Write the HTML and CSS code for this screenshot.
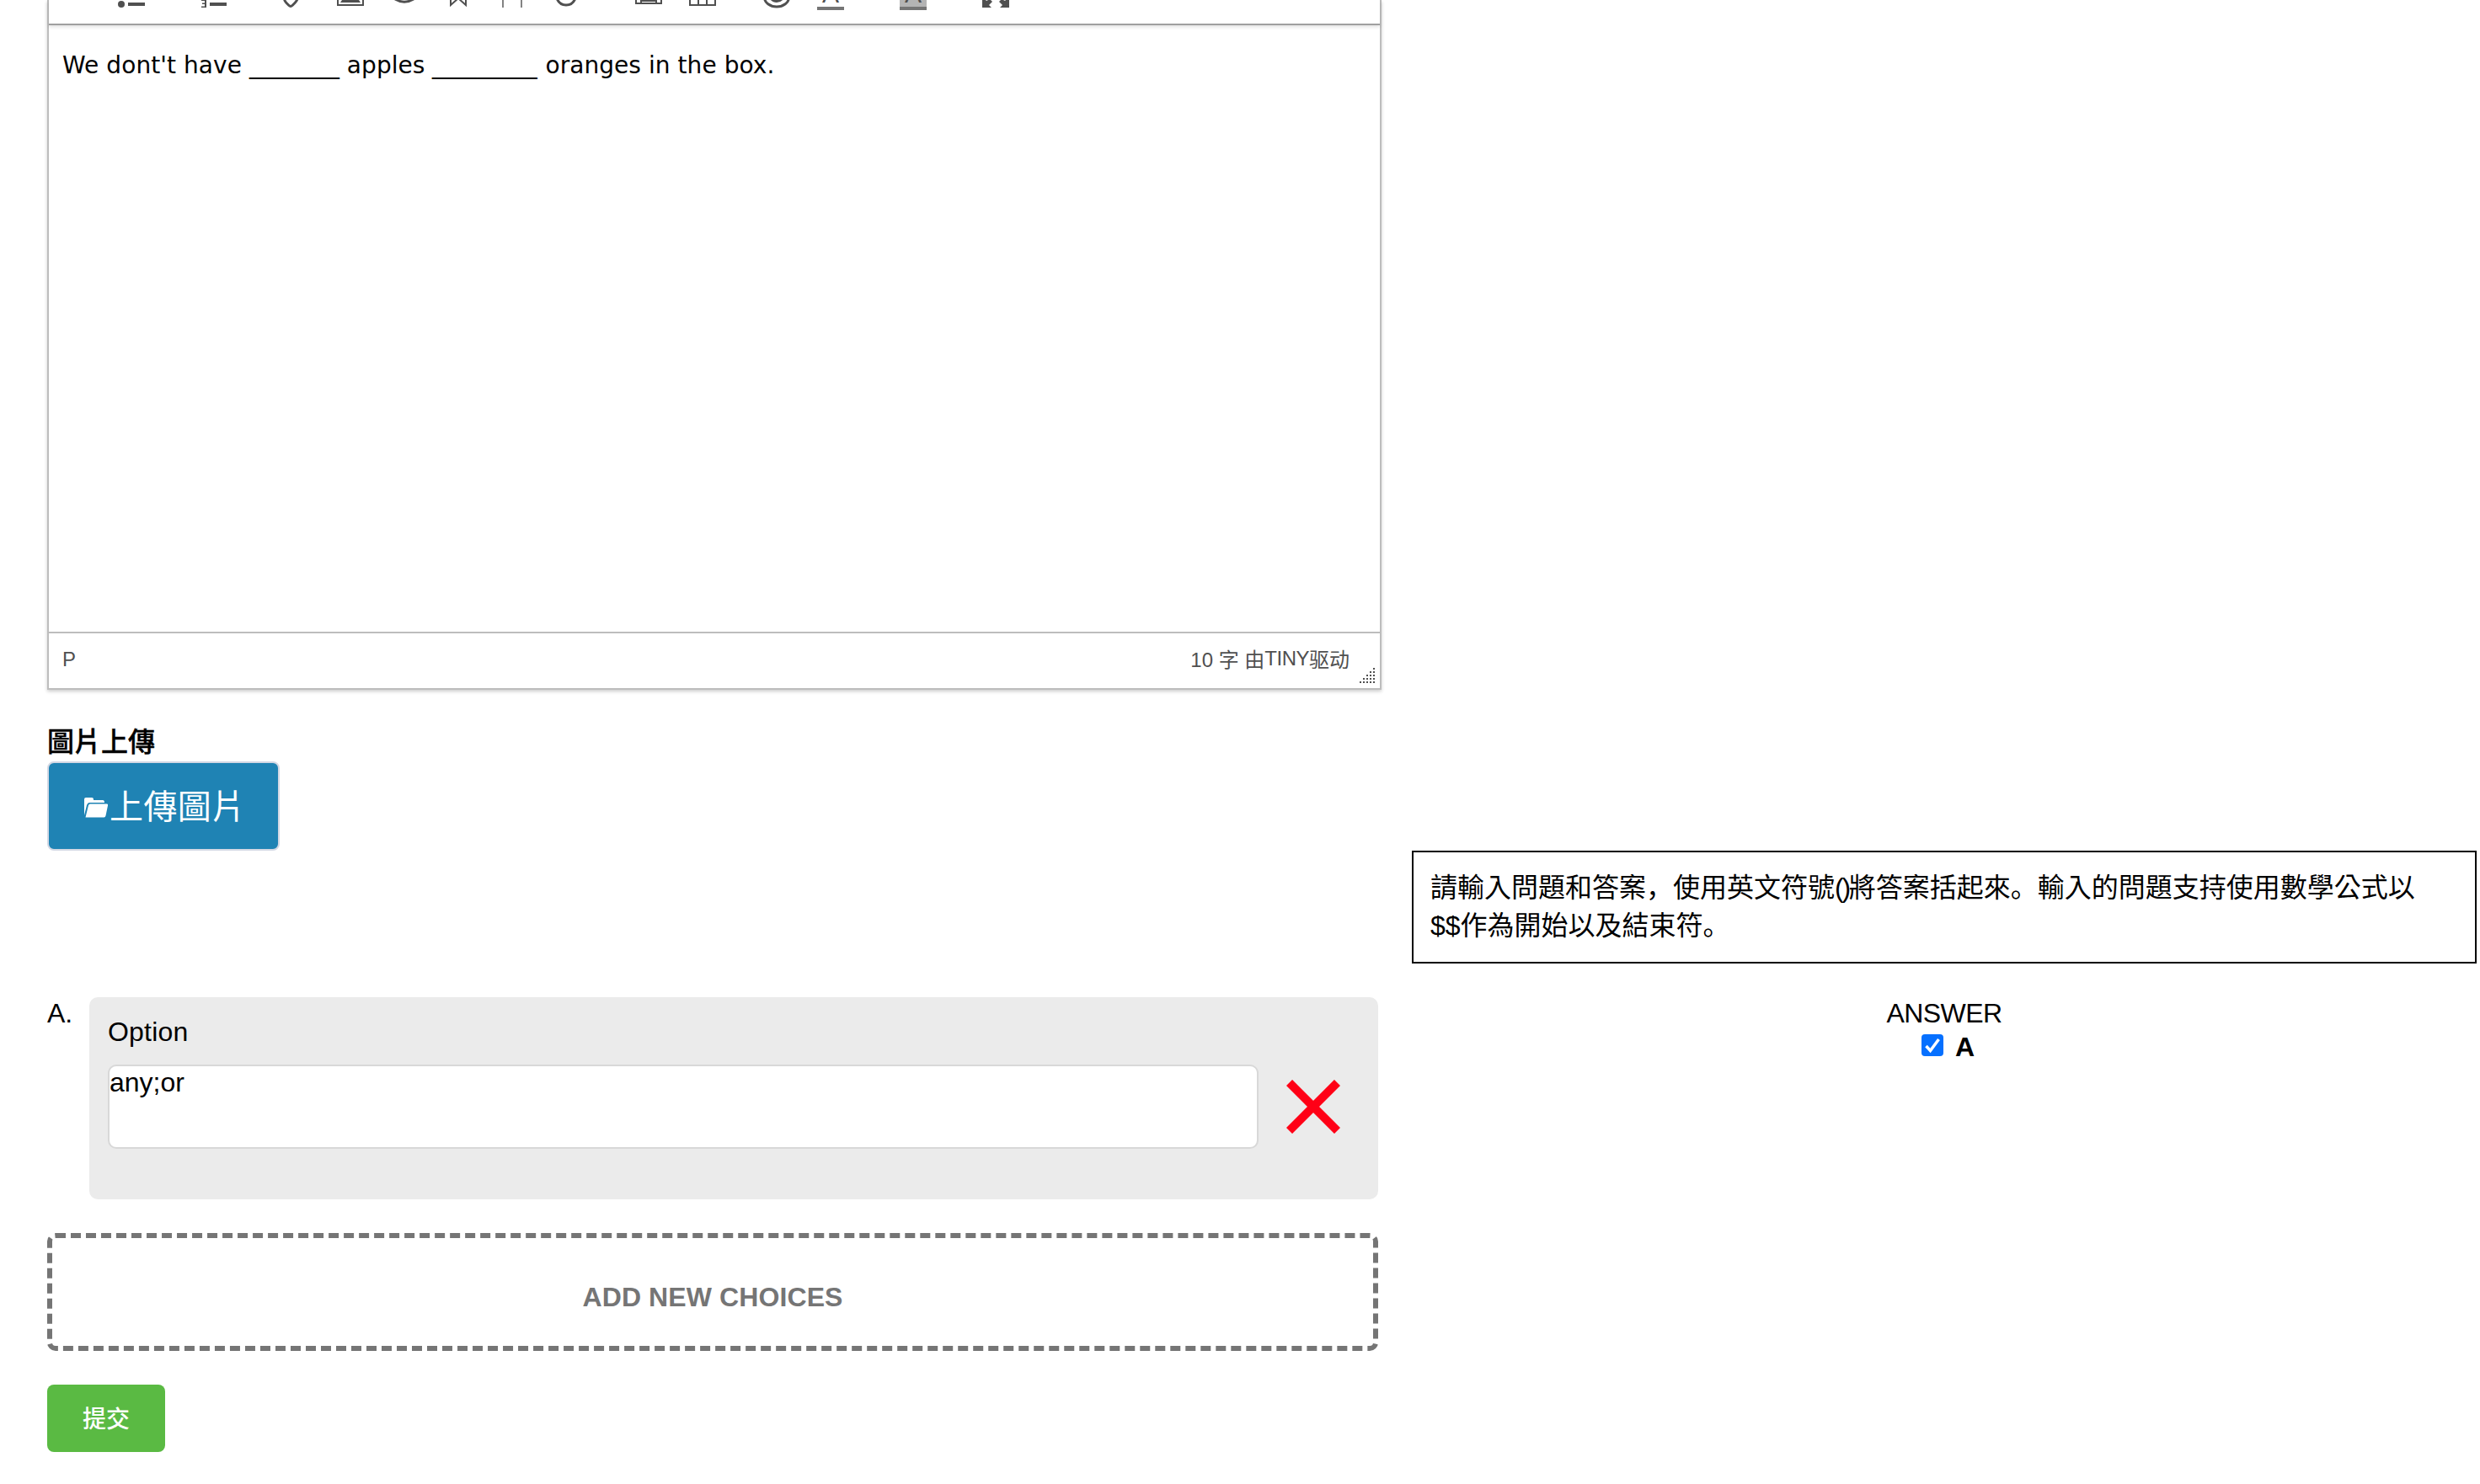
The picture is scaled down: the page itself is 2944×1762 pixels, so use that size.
FILE: index.html
```html
<!DOCTYPE html>
<html lang="zh-Hant">
    <head>
        <meta charset="utf-8">
        <title>Question Editor</title>
        <link rel="stylesheet" href="styles.css">
    </head>
    <body>
        <div id="page">
            <!-- Question editor and its note -->
            <div id="question">
                <div class="editor">
                    <!-- Only the bottom part of the toolbar is in view -->
                    <div class="toolbar">
                        <svg viewBox="0 0 32 28"><circle cx="4" cy="5" r="4"/><path d="M12 3h20v4H12z"/></svg>
                        <svg class="menu" viewBox="0 0 32 28"><path d="M1 0h6v9H1V7.500h4V5H2V3.500h3V1H1zM11 3h20v4H11z"/></svg>
                        <svg class="line menu" viewBox="0 0 32 28"><path d="M1.500-1Q2 1.500 4 3.500L7 6.500Q9 8.300 11 6.500L14 3.500Q16 1.500 17-1"/></svg>
                        <svg viewBox="0 0 32 28"><path d="M0-5h2V5h28V-5h2V7H0zM4 3l4-6h16l4 6z"/></svg>
                        <svg class="line" viewBox="0 0 32 28"><path d="M5-1Q16 5.500 27-1"/></svg>
                        <svg class="line thin" viewBox="0 0 32 28"><path d="M7-4V6l9-8 9 8V-4"/></svg>
                        <svg class="line thin faded" viewBox="0 0 32 28"><path d="M5-4V9M27-4V9"/></svg>
                        <svg class="line" viewBox="0 0 32 28"><path d="M5-2Q8 6 16 6T27-2"/></svg>
                        <svg class="line thin menu" viewBox="0 0 32 28"><path d="M1-4V4h30V-4M7-4V4M25-4V4M7 1h18"/></svg>
                        <svg class="line thin" viewBox="0 0 32 28"><path d="M1-4V6h30V-4M11-4V6M21-4V6"/></svg>
                        <svg class="smile" viewBox="0 0 32 28"><path class="ring" d="M1.500-3a14.500 11 0 0 0 29 0"/><path d="M8-1h16q-3 4-8 4t-8-4z"/></svg>
                        <svg class="color" viewBox="0 0 32 28"><text x="16" y="3">A</text><path class="bar" d="M0 8h32v4H0z"/></svg>
                        <svg class="color menu" viewBox="0 0 32 28"><path class="back" d="M0 0h32v8H0z"/><text x="16" y="3">A</text><path class="bar" d="M0 8h32v4H0z"/></svg>
                        <svg class="menu" viewBox="0 0 32 28"><path d="M0-4l5 5 4-2 3 3-4 4 3 3H0zM32-4l-5 5-4-2-3 3 4 4-3 3h11z"/></svg>
                    </div>
                    <div class="content">We dont't have <span class="blank six">______</span> apples <span class="blank seven">_______</span> oranges in the box.</div>
                    <div class="statusbar">
                        <span class="path">P</span>
                        <span class="words">10 字 由<span class="brand">TINY</span>驱动</span>
                        <svg class="resize" viewBox="0 0 18 18"><path d="M16 0h2v2h-2zM12 4h2v2h-2zM16 4h2v2h-2zM8 8h2v2H8zM12 8h2v2h-2zM16 8h2v2h-2zM4 12h2v2H4zM8 12h2v2H8zM12 12h2v2h-2zM16 12h2v2h-2zM0 16h2v2H0zM4 16h2v2H4zM8 16h2v2H8zM12 16h2v2h-2zM16 16h2v2h-2z"/></svg>
                    </div>
                </div>

                <label class="label">圖片上傳</label>
                <button class="upload">
                    <svg viewBox="0 0 32 26"><path d="M2 22V3q0-2 2-2h7q2 0 2 2v1h11q2 0 2 3H8q-2 0-3 3z"/><path d="M7 10q.7-1.500 2-1.500h20q1.500 0 1 2l-2.500 12q-.5 2-2 2H3.500z"/></svg><span>上傳圖片</span>
                </button>
            </div>

            <div class="note">請輸入問題和答案<span class="mark" lang="zh-Hans">，</span>使用英文符號<span class="tight">()</span>將答案括起來<span class="mark" lang="zh-Hans">。</span>輸入的問題支持使用數學公式以$$作為開始以及結束符<span class="mark" lang="zh-Hans">。</span></div>

            <!-- Choices -->
            <div id="choices">
                <div class="choice">
                    <div class="letter">A.</div>
                    <div class="option">
                        <div class="title">Option</div>
                        <div class="row">
                            <div class="answer-input">any;or</div>
                            <svg class="remove" viewBox="0 0 64 64"><path d="M3.500 3.500l57 57M60.500 3.500l-57 57"/></svg>
                        </div>
                    </div>
                </div>
                <div class="add">ADD NEW CHOICES</div>
                <button class="submit">提交</button>
            </div>

            <div class="answers">
                <div class="heading">ANSWER</div>
                <label class="check">
                    <svg viewBox="0 0 26 26"><rect width="26" height="26" rx="4"/><path d="M5.500 14l5 5.500L20.500 6"/></svg>
                    <b>A</b>
                </label>
            </div>
        </div>
    </body>
</html>
```
FILE: styles.css
```css
* {
    box-sizing: border-box;
}

body {
    margin: 0;
    background: #fff;
    color: #000;
    font-family: "Liberation Sans", "Noto Sans CJK TC", sans-serif;
    font-size: 32px;
    line-height: 40px;
}

#page {
    display: grid;
    grid-template-columns: 1584px 1264px;
    grid-template-rows: 1144px auto;
    column-gap: 36px;
    row-gap: 40px;
    padding-left: 56px;
    height: 1762px;
    overflow: hidden;
}

/**Editor**/
.editor {
    display: flex;
    flex-direction: column;
    height: 819px;
    border: 2px solid #bdbdbd;
    border-top: 0;
    box-shadow: 0 2px 4px rgba(0, 0, 0, .2);
}

.toolbar {
    display: flex;
    gap: 32px;
    height: 30px;
    padding-left: 82px;
    border-bottom: 2px solid #a0a0a0;
    box-shadow: 0 2px 4px rgba(0, 0, 0, .12);
    overflow: hidden;
}

.toolbar svg {
    flex: none;
    width: 32px;
    height: 28px;
    fill: #505050;
}

/*extra room for the dropdown arrow before these*/
.toolbar .menu {
    margin-left: 34px;
}

.toolbar .line {
    fill: none;
    stroke: #505050;
    stroke-width: 3;
}

.toolbar .thin {
    stroke-width: 2;
}

.toolbar .faded {
    opacity: .7;
}

.toolbar .smile {
    margin-left: 24px;
}

.ring {
    fill: none;
    stroke: #505050;
    stroke-width: 3;
}

.color text {
    font-size: 30px;
    text-anchor: middle;
}

.color .bar {
    fill: #757575;
}

.color .back {
    fill: #b4b4b4;
}

.content {
    flex: 1;
    padding: 28px 16px;
    font-family: "DejaVu Sans", sans-serif;
    font-size: 28px;
    letter-spacing: .06px;
    white-space: nowrap;
}

/*Blanks are stretched to the width of a wide underscore*/
.blank {
    display: inline-block;
    letter-spacing: 0;
    transform: scaleX(1.272);
    transform-origin: left;
}

.six {
    width: 107px;
}

.seven {
    width: 125px;
}

.statusbar {
    position: relative;
    display: flex;
    justify-content: space-between;
    height: 67px;
    padding: 11px 36px 0 16px;
    border-top: 2px solid #bdbdbd;
    color: #505050;
    font-family: "Liberation Sans", "Noto Sans CJK SC", sans-serif;
    font-size: 24px;
}

.words {
    padding-top: 1px;
}

.brand {
    position: relative;
    top: -2px;
    letter-spacing: -.5px;
}

.resize {
    position: absolute;
    right: 6px;
    bottom: 6px;
    width: 18px;
    height: 18px;
    fill: #505050;
}

/**Image upload**/
.label {
    display: block;
    height: 85px;
    padding-top: 42px;
    font-weight: 500;
    -webkit-text-stroke: .4px #000;
}

.upload {
    display: flex;
    align-items: center;
    width: 276px;
    height: 106px;
    padding: 0 40px;
    border: 2px solid #d3d8e4;
    border-radius: 8px;
    background: #1f83b4;
    color: #fff;
    font-family: "Liberation Sans", "Noto Sans CJK TC", sans-serif;
    font-size: 40px;
    letter-spacing: .4px;
    white-space: nowrap;
}

.upload span {
    margin-top: -4px;
}

.upload svg {
    flex: none;
    width: 32px;
    height: 26px;
    margin-top: 3px;
    fill: #fff;
}

.note {
    align-self: end;
    height: 134px;
    padding: 20px;
    border: 2px solid #000;
    line-height: 45px;
}

/*punctuation sits at the lower left*/
.mark {
    font-family: "Noto Sans CJK SC", sans-serif;
    line-height: 1;
}

.tight {
    letter-spacing: -2.3px;
}

/**Choices**/
#choices {
    width: 1580px;
}

.choice {
    display: flex;
    margin-bottom: 40px;
}

.letter {
    width: 50px;
    margin-top: -1px;
}

.option {
    flex: 1;
    height: 240px;
    padding: 21px 22px;
    border-radius: 10px;
    background: #ebebeb;
}

.title {
    letter-spacing: .2px;
}

.row {
    display: flex;
    align-items: center;
    gap: 33px;
    margin-top: 19px;
}

.answer-input {
    width: 1366px;
    height: 100px;
    border: 2px solid #d8d8d8;
    border-radius: 10px;
    background: #fff;
    line-height: 38px;
}

.remove {
    width: 64px;
    height: 64px;
    stroke: #ff0016;
    stroke-width: 10;
}

.add {
    height: 140px;
    padding-top: 50px;
    border: 6px dashed #757575;
    border-radius: 10px;
    color: #757575;
    font-weight: bold;
    letter-spacing: .1px;
    text-align: center;
}

.submit {
    display: block;
    width: 140px;
    height: 80px;
    margin-top: 40px;
    padding: 0 0 3px;
    border: 0;
    border-radius: 8px;
    background: #5aba43;
    color: #fff;
    font-family: "Noto Sans CJK TC", sans-serif;
    font-size: 28px;
    font-weight: 500;
}

/**Correct answer**/
.answers {
    margin-top: -1px;
    text-align: center;
}

.heading {
    letter-spacing: -.6px;
}

.check {
    display: flex;
    justify-content: center;
    align-items: center;
    gap: 14px;
    padding-left: 9px;
}

.check svg {
    width: 26px;
    height: 26px;
    margin-bottom: 4px;
    fill: #0670ff;
}

.check path {
    fill: none;
    stroke: #fff;
    stroke-width: 3.5;
}
```
